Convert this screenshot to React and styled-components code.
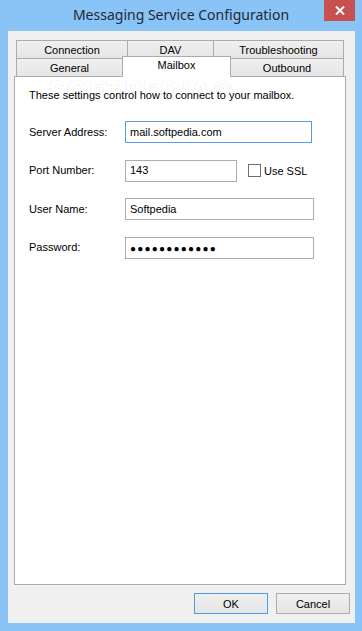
import styled, { createGlobalStyle } from "styled-components";

const GlobalStyle = createGlobalStyle`
	html, body {
		margin: 0;
		padding: 0;
		background: #8ac3f6;
	}
	* {
		box-sizing: border-box;
	}
`;

const Window = styled.div`
	width: 362px;
	height: 631px;
	display: flex;
	flex-direction: column;
	background: #8ac3f6;
	font-family: "Liberation Sans", Arial, sans-serif;
	font-size: 11px;
	color: #000;
`;

const TitleBar = styled.div`
	position: relative;
	height: 31px;
	display: flex;
	align-items: center;
	justify-content: center;
	padding-bottom: 2px;
`;

const Title = styled.div`
	font-family: "Noto Sans", "Open Sans", sans-serif;
	font-size: 14px;
	color: #1e2a36;
`;

const CloseButton = styled.div`
	position: absolute;
	top: 0;
	right: 7px;
	width: 31px;
	height: 21px;
	background: #c75050;
	display: flex;
	align-items: center;
	justify-content: center;
`;

const Client = styled.div`
	flex: 1;
	margin: 0 7px 8px 8px;
	background: #f0f0f0;
	display: flex;
	flex-direction: column;
	padding: 9px 7px 9px 6px;
`;

const TabRow = styled.div`
	display: flex;
	height: 18px;
	margin-left: 2px;
`;

const Tab = styled.div`
	width: ${(p) => p.$w}px;
	height: 18px;
	margin-left: -1px;
	border: 1px solid #acacac;
	border-bottom: none;
	background: linear-gradient(#f0f0f0, #e5e5e5);
	display: flex;
	align-items: center;
	justify-content: center;
	padding-top: 1px;

	&:first-child {
		margin-left: 0;
	}
`;

const ActiveTab = styled(Tab)`
	position: relative;
	z-index: 1;
	height: 21px;
	margin-top: -2px;
	margin-bottom: -1px;
	background: #fff;
	align-items: flex-start;
	padding-top: 2px;
`;

const Panel = styled.div`
	position: relative;
	flex: 1;
	width: 332px;
	background: #fff;
	border: 1px solid #acacac;
	padding: 11px 14px;
`;

const Watermark = styled.div`
	position: absolute;
	left: 33px;
	top: -1px;
	font-family: "DejaVu Sans", sans-serif;
	font-weight: bold;
	font-size: 25px;
	letter-spacing: 0.5px;
	color: #fff;
	text-shadow: 0 0 1px #e6e6e6, 0 0 1px #e6e6e6;
	pointer-events: none;
`;

const Intro = styled.p`
	position: relative;
	margin: 0 0 18px;
	line-height: 15px;
`;

const Form = styled.div`
	position: relative;
	display: grid;
	grid-template-columns: 96px 1fr;
	grid-auto-rows: 22px;
	row-gap: 16.67px;
	align-items: center;
`;

const Label = styled.label`
	line-height: 15px;
`;

const FieldLine = styled.div`
	display: flex;
	align-items: center;
	gap: 11px;
`;

const Input = styled.div`
	width: ${(p) => p.$w}px;
	height: 22px;
	border: 1px solid ${(p) => (p.$focused ? "#569de5" : "#abadb3")};
	background: #fff;
	padding: 0 4px;
	display: flex;
	align-items: center;
	padding-bottom: ${(p) => (p.$raise ? 2 : 0)}px;
`;

const Dots = styled.span`
	font-size: 10px;
	letter-spacing: 1.2px;
	padding-top: 1px;
`;

const CheckLabel = styled.label`
	display: flex;
	align-items: center;
	gap: 3px;
`;

const CheckBox = styled.span`
	width: 13px;
	height: 13px;
	border: 1px solid #707070;
	background: #fff;
`;

const Buttons = styled.div`
	display: flex;
	justify-content: flex-end;
	gap: 8px;
	margin-top: 8px;
	margin-right: -2px;
`;

const Button = styled.div`
	width: 74px;
	height: 21px;
	border: 1px solid ${(p) => (p.$default ? "#4f9be6" : "#acacac")};
	background: linear-gradient(#f0f0f0, #e5e5e5);
	display: flex;
	align-items: center;
	justify-content: center;
`;

export default function App() {
	return (
		<>
			<GlobalStyle />
			<Window>
				<TitleBar>
					<Title>Messaging Service Configuration</Title>
					<CloseButton>
						<svg width="10" height="9" viewBox="0 0 10 9">
							<path d="M1 0.5 L9 8.5 M9 0.5 L1 8.5" stroke="#fff" strokeWidth="2" />
						</svg>
					</CloseButton>
				</TitleBar>
				<Client>
					<TabRow>
						<Tab $w={112}>Connection</Tab>
						<Tab $w={87}>DAV</Tab>
						<Tab $w={131}>Troubleshooting</Tab>
					</TabRow>
					<TabRow>
						<Tab $w={107}>General</Tab>
						<ActiveTab $w={109}>Mailbox</ActiveTab>
						<Tab $w={114}>Outbound</Tab>
					</TabRow>
					<Panel>
						<Watermark>SOFTPEDIA®</Watermark>
						<Intro>These settings control how to connect to your mailbox.</Intro>
						<Form>
							<Label>Server Address:</Label>
							<Input $w={187} $focused>mail.softpedia.com</Input>

							<Label>Port Number:</Label>
							<FieldLine>
								<Input $w={112} $raise>143</Input>
								<CheckLabel>
									<CheckBox />
									Use SSL
								</CheckLabel>
							</FieldLine>

							<Label>User Name:</Label>
							<Input $w={189}>Softpedia</Input>

							<Label>Password:</Label>
							<Input $w={189}>
								<Dots>●●●●●●●●●●●●</Dots>
							</Input>
						</Form>
					</Panel>
					<Buttons>
						<Button $default>OK</Button>
						<Button>Cancel</Button>
					</Buttons>
				</Client>
			</Window>
		</>
	);
}
